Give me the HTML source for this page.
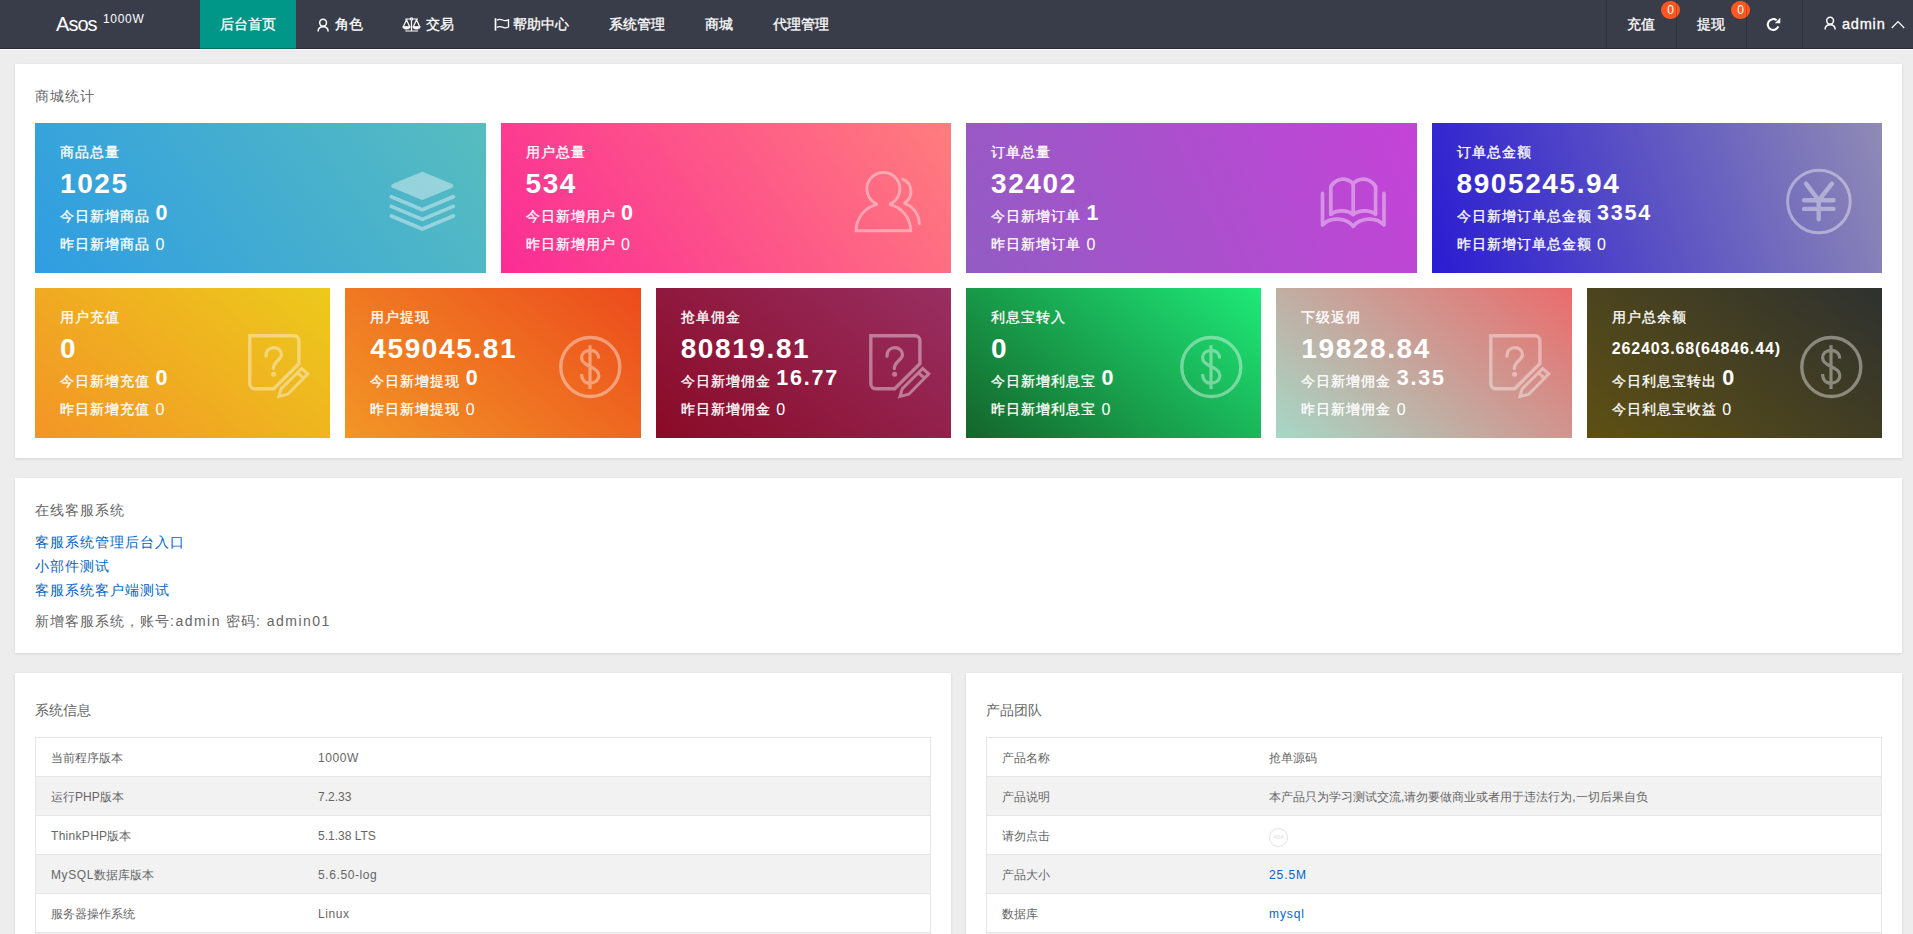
<!DOCTYPE html>
<html lang="zh">
<head>
<meta charset="utf-8">
<title>Asos</title>
<style>
*{box-sizing:border-box}
html,body{margin:0;padding:0}
body{width:1913px;height:934px;overflow:hidden;background:#ededed;font-family:"Liberation Sans",sans-serif;font-size:14px;color:#666;position:relative}
a{color:#0066cc;text-decoration:none}
/* header */
.hd{position:absolute;left:0;top:0;width:1913px;height:49px;background:#393d49;box-shadow:0 1px 0 rgba(255,255,255,.8);z-index:5}
.hd:after{content:"";position:absolute;left:0;bottom:0;width:100%;height:1px;background:rgba(0,0,0,.28)}
.logo{position:absolute;left:56px;top:0;line-height:48px;color:#fff;font-size:20px;letter-spacing:-.95px;white-space:nowrap}
.logo sup{position:absolute;left:47px;top:-5px;font-size:12px;line-height:48px;letter-spacing:.7px}
.nav{position:absolute;left:200px;top:0;height:49px;display:flex}
.nav .it{height:49px;line-height:48px;padding:0 20px;color:#fff;font-size:14px;white-space:nowrap;display:flex;align-items:center}
.nav .it.on{background:#009688}
.nav .it{padding-bottom:2px}
.nav .it svg{margin-right:5px;display:block;position:relative;top:1px}
.rnav{position:absolute;top:0;height:49px;line-height:48px;color:#fff;font-size:14px;border-left:1px solid rgba(0,0,0,.18);white-space:nowrap}
.badge{position:absolute;top:1px;width:19px;height:18px;border-radius:9px;background:#ff5722;color:#fff;font-size:12px;line-height:18px;text-align:center}
/* panels */
.panel{position:absolute;background:#fff;box-shadow:0 1px 3px 0 rgba(0,0,0,.1)}
.legend{position:absolute;left:20px;font-size:14px;color:#666;white-space:nowrap;line-height:20px}
.ls{letter-spacing:1px}
/* cards */
.card{position:absolute;height:150px;color:#fff;letter-spacing:1px;overflow:hidden}
.card div{position:absolute;left:25px;white-space:nowrap;line-height:20px;font-size:14px}
.card .t{top:19px}
.card .n{top:46px;font-size:28px;font-weight:bold;line-height:30px;letter-spacing:1.600px}
.card .a{top:81px}
.card .b{top:111px}
.card .a b{font-size:21.500px;font-weight:bold;margin-left:5.500px;position:relative;top:-1px;letter-spacing:1.800px}
.card .b i{font-style:normal;font-size:16px;margin-left:5.500px;position:relative;top:1px}
.card svg{position:absolute}
.card .n.s{font-size:16px;letter-spacing:.85px}
.card .t,.card .a,.card .b,.nav .it,.rnav{-webkit-text-stroke:.3px #fff}
.card .a b,.card .b i,.badge{-webkit-text-stroke:0}
.ln{position:absolute;left:20px;line-height:20px;white-space:nowrap;font-size:14px}
.c404{position:relative;top:1px;display:inline-block;width:19px;height:19px;border:1px solid #e2e2e2;border-radius:50%;font-size:6px;line-height:17px;text-align:center;color:#ddd;vertical-align:middle;letter-spacing:0}
/* tables */
table{position:absolute;border-collapse:collapse;font-size:12px;color:#666}
table{border:1px solid #e6e6e6}
td{border-top:1px solid #e6e6e6;border-bottom:1px solid #e6e6e6;height:39px;padding:2px 15px 0 15px;white-space:nowrap}
td+td{padding-left:13.500px}
.w6{letter-spacing:.6px}.w9{letter-spacing:.9px}
tr:nth-child(even) td{background:#f2f2f2}
</style>
</head>
<body>

<svg width="0" height="0" style="position:absolute">
<defs>
<symbol id="i-layers" viewBox="0 0 76 70"><g opacity=".4" fill="#fff" stroke="#fff" stroke-linecap="round" stroke-linejoin="round">
<polygon points="37.3,6.800 8.200,18.900 37.300,31 66.400,18.900" stroke-width="4"/>
<g fill="none" stroke-width="3.700"><path d="M6.300 29.800 37.300 42.800 68.300 29.800"/><path d="M6.300 39.400 37.300 52.400 68.300 39.400"/><path d="M6.300 49 37.300 62 68.300 49"/></g></g></symbol>
<symbol id="i-users" viewBox="0 0 76 70"><g opacity=".4" fill="none" stroke="#fff" stroke-width="2.900" stroke-linejoin="miter" stroke-miterlimit="2.2" stroke-linecap="round">
<path d="M5 63.800A27.400 27.400 0 0 1 26.400 37.300 16.500 16.500 0 1 1 38.400 37.300 27.400 27.400 0 0 1 59.800 63.800Z"/>
<path d="M51.700 12.100A13.400 13.400 0 0 1 53 36.200 22 22 0 0 1 68.300 56.700"/></g></symbol>
<symbol id="i-book" viewBox="0 0 76 70"><g opacity=".4" fill="none" stroke="#fff" stroke-width="3.700" stroke-linejoin="round" stroke-linecap="round">
<path d="M6.500 26.400V58C14 50 30 50 37.200 59.500 44.400 50 60.400 50 68 58V26.400"/>
<path d="M14.800 47.200V19.500C18 14 24 12 27 12.200 31 12.400 35 14 37.200 16.800 39.400 14 43.400 12.400 47.400 12.200 50.400 12 56.400 14 59.600 19.500V47.200"/>
<path d="M37.200 16.800V47.500"/>
<path d="M14.800 47.200C20 43 31 42.500 37.200 47.500 43.400 42.500 54.400 43 59.600 47.200"/></g></symbol>
<symbol id="i-yen" viewBox="0 0 76 76"><g opacity=".4" fill="none" stroke="#fff" stroke-linecap="round" stroke-linejoin="round">
<circle cx="36.900" cy="37.500" r="31.300" stroke-width="3"/>
<path stroke-width="4.400" d="M24 19.700 36.700 36.300 50 19.700M22.100 36.300H51.500M22.100 44.900H51.500M36.700 36.300V55.300"/></g></symbol>
<symbol id="i-edit" viewBox="0 0 72 72"><g opacity=".4" fill="none" stroke="#fff">
<path stroke-width="3.400" d="M5.800 5.700H50A4.900 4.900 0 0 1 54.900 10.600V33.700L29.700 58.700H10.700A4.900 4.900 0 0 1 5.800 53.800Z"/>
<path stroke-width="3.300" stroke-linecap="round" d="M22 26.200C22 20.500 25.500 17.700 29.800 17.700 34 17.700 37.500 20.500 37.500 24.800 37.500 30 29.300 31.500 29.300 38.500"/>
<circle cx="29.600" cy="44.200" r="2.500" fill="#fff" stroke="none"/>
<path stroke-width="3" d="M57.600 38.500 63.800 43.800 43.800 64.200 35 66.500 37.200 58.900ZM53.300 42.800 59.500 48"/></g></symbol>
<symbol id="i-usd" viewBox="0 0 72 72"><g opacity=".4" fill="none" stroke="#fff">
<circle cx="35.300" cy="35" r="29.500" stroke-width="3.400"/>
<path stroke-width="3.200" d="M35 13.200V57.100M43.600 26.500C43.600 21 40 18.300 35 18.300 30 18.300 26.600 21.500 26.600 25.600 26.600 30.500 31 32.800 35 34.500 39.500 36.400 43.800 38.800 43.800 43.600 43.800 48.200 40 51.200 35 51.200 30 51.200 26.600 48 26.600 42"/></g></symbol>
</defs></svg>
<div class="hd">
  <div class="logo">Asos<sup>1000W</sup></div>
  <div class="nav">
    <div class="it on">后台首页</div>
    <div class="it"><svg width="14" height="14" viewBox="0 0 14 14" fill="none" stroke="#fff" stroke-width="1.500"><circle cx="7.100" cy="4.700" r="3.400"/><path d="M2.100 13.600C2.100 10.600 4.300 8.800 7.100 8.800S12.100 10.600 12.100 13.600"/></svg>角色</div>
    <div class="it"><svg width="19" height="15" viewBox="0 0 19 15" style="margin-left:-1px" fill="none" stroke="#fff" stroke-width="1.200"><path d="M3.300 2H16M9.500 3V14M3.300 14H16M4.500 2.800 1.400 9.500M4.500 2.800 7.600 9.500M14.500 2.800 11.400 9.500M14.500 2.800 17.600 9.500"/><circle cx="9.500" cy="2" r="1.100" fill="#393d49"/><path fill="#fff" stroke-width=".6" d="M.7 9.500H8.300C8.300 11.400 6.500 12.200 4.500 12.200S.7 11.400.7 9.500ZM10.700 9.500H18.300C18.300 11.400 16.500 12.200 14.500 12.200S10.700 11.400 10.700 9.500Z"/></svg>交易</div>
    <div class="it"><svg width="16" height="15" viewBox="0 0 16 15" style="margin-right:3px" fill="none" stroke="#fff" stroke-width="1.300"><path stroke-width="1.700" d="M1.500 1.200V13.600"/><path d="M2.800 3.200C4.800 2 6.800 2.200 8.600 3 10.300 3.800 12.300 3.800 14.500 2.900V10C12.300 11 10.300 11 8.600 10.200 6.800 9.400 4.800 9.200 2.800 10.400"/></svg>帮助中心</div>
    <div class="it">系统管理</div>
    <div class="it">商城</div>
    <div class="it">代理管理</div>
  </div>
  <div class="rnav" style="left:1606px;width:70px;padding-left:20px">充值<span class="badge" style="left:54px">0</span></div>
  <div class="rnav" style="left:1676px;width:70px;padding-left:20px">提现<span class="badge" style="left:54px">0</span></div>
  <div class="rnav" style="left:1746px;width:56px"><svg style="position:absolute;left:19px;top:16.500px" width="15" height="15" viewBox="0 0 15 15" fill="none" stroke="#fff" stroke-width="2"><path d="M12.300 9.300A5.400 5.400 0 1 1 10.600 3.300"/><path d="M14.300.8V6.300H8.800Z" fill="#fff" stroke="none"/></svg></div>
  <div class="rnav" style="left:1802px;width:111px;padding-left:39px;font-size:14.500px;letter-spacing:.8px"><svg style="position:absolute;left:20px;top:16px" width="14" height="14" viewBox="0 0 14 14" fill="none" stroke="#fff" stroke-width="1.500"><circle cx="7.100" cy="4.700" r="3.400"/><path d="M2.100 13.600C2.100 10.600 4.300 8.800 7.100 8.800S12.100 10.600 12.100 13.600"/></svg>admin<svg style="position:absolute;left:88px;top:19.500px" width="14" height="9" viewBox="0 0 14 9" fill="none" stroke="#fff" stroke-width="1.200"><path d="M.8 8 7 1.500 13.200 8"/></svg></div>
</div>

<div class="panel" style="left:15px;top:64px;width:1887px;height:394px">
  <div class="legend ls" style="top:22px">商城统计</div>
<div class="card" style="left:20.0px;top:59px;width:450.5px;background:linear-gradient(-125deg,#57bdbf,#2f9de2)"><div class="t">商品总量</div><div class="n">1025</div><div class="a">今日新增商品<b>0</b></div><div class="b">昨日新增商品<i>0</i></div><svg style="left:350px;top:44px" width="76" height="70"><use href="#i-layers"/></svg></div>
<div class="card" style="left:485.5px;top:59px;width:450.5px;background:linear-gradient(-125deg,#ff7d7d,#fb2c95)"><div class="t">用户总量</div><div class="n">534</div><div class="a">今日新增用户<b>0</b></div><div class="b">昨日新增用户<i>0</i></div><svg style="left:350.5px;top:44px" width="76" height="70"><use href="#i-users"/></svg></div>
<div class="card" style="left:951.0px;top:59px;width:450.5px;background:linear-gradient(-113deg,#c543d8,#925cc3)"><div class="t">订单总量</div><div class="n">32402</div><div class="a">今日新增订单<b>1</b></div><div class="b">昨日新增订单<i>0</i></div><svg style="left:350px;top:44px" width="76" height="70"><use href="#i-book"/></svg></div>
<div class="card" style="left:1416.5px;top:59px;width:450.5px;background:linear-gradient(-108deg,#8f8bb5,#2a1cd2)"><div class="t">订单总金额</div><div class="n">8905245.94</div><div class="a">今日新增订单总金额<b>3354</b></div><div class="b">昨日新增订单总金额<i>0</i></div><svg style="left:350.5px;top:41px" width="76" height="76"><use href="#i-yen"/></svg></div>
<div class="card" style="left:20.00px;top:224px;width:295.33px;background:linear-gradient(-141deg,#ecca1b,#f39526)"><div class="t">用户充值</div><div class="n">0</div><div class="a">今日新增充值<b>0</b></div><div class="b">昨日新增充值<i>0</i></div><svg style="left:209px;top:42px" width="72" height="72"><use href="#i-edit"/></svg></div>
<div class="card" style="left:330.33px;top:224px;width:295.33px;background:linear-gradient(-141deg,#ec4b1c,#f29626)"><div class="t">用户提现</div><div class="n">459045.81</div><div class="a">今日新增提现<b>0</b></div><div class="b">昨日新增提现<i>0</i></div><svg style="left:209.7px;top:44px" width="72" height="72"><use href="#i-usd"/></svg></div>
<div class="card" style="left:640.67px;top:224px;width:295.33px;background:linear-gradient(-141deg,#982f62,#8a0a26)"><div class="t">抢单佣金</div><div class="n">80819.81</div><div class="a">今日新增佣金<b>16.77</b></div><div class="b">昨日新增佣金<i>0</i></div><svg style="left:209px;top:42px" width="72" height="72"><use href="#i-edit"/></svg></div>
<div class="card" style="left:951.00px;top:224px;width:295.33px;background:linear-gradient(-141deg,#1eea78,#14642a)"><div class="t">利息宝转入</div><div class="n">0</div><div class="a">今日新增利息宝<b>0</b></div><div class="b">昨日新增利息宝<i>0</i></div><svg style="left:209.7px;top:44px" width="72" height="72"><use href="#i-usd"/></svg></div>
<div class="card" style="left:1261.33px;top:224px;width:295.33px;background:linear-gradient(-141deg,#ea6c6c,#a6d8c6)"><div class="t">下级返佣</div><div class="n">19828.84</div><div class="a">今日新增佣金<b>3.35</b></div><div class="b">昨日新增佣金<i>0</i></div><svg style="left:209px;top:42px" width="72" height="72"><use href="#i-edit"/></svg></div>
<div class="card" style="left:1571.67px;top:224px;width:295.33px;background:linear-gradient(-141deg,#2e312f,#5e5013)"><div class="t">用户总余额</div><div class="n s">262403.68(64846.44)</div><div class="a">今日利息宝转出<b>0</b></div><div class="b">今日利息宝收益<i>0</i></div><svg style="left:209.7px;top:44px" width="72" height="72"><use href="#i-usd"/></svg></div>
</div>

<div class="panel" style="left:15px;top:478px;width:1887px;height:175px">
  <div class="legend ls" style="top:22px">在线客服系统</div>
  <div class="ln ls" style="top:54px"><a>客服系统管理后台入口</a></div>
  <div class="ln ls" style="top:78px"><a>小部件测试</a></div>
  <div class="ln ls" style="top:102px"><a>客服系统客户端测试</a></div>
  <div class="ln ls" style="top:133px">新增客服系统，账号<span style="letter-spacing:1.500px">:admin</span> 密码<span style="letter-spacing:1.500px">: admin01</span></div>
</div>

<div class="panel" style="left:15px;top:673px;width:936px;height:300px">
  <div class="legend" style="top:27px">系统信息</div>
  <table style="left:20px;top:64px;width:896px">
  <tr><td style="width:269px">当前程序版本</td><td class="w6">1000W</td></tr>
  <tr><td>运行PHP版本</td><td>7.2.33</td></tr>
  <tr><td><span style="letter-spacing:.3px">ThinkPHP</span>版本</td><td>5.1.38 LTS</td></tr>
  <tr><td><span class="w6">MySQL</span>数据库版本</td><td class="w6">5.6.50-log</td></tr>
  <tr><td>服务器操作系统</td><td class="w6">Linux</td></tr>
  <tr><td>WEB运行环境</td><td>fpm-fcgi</td></tr>
  </table>
</div>
<div class="panel" style="left:966px;top:673px;width:936px;height:300px">
  <div class="legend" style="top:27px">产品团队</div>
  <table style="left:20px;top:64px;width:896px">
  <tr><td style="width:269px">产品名称</td><td>抢单源码</td></tr>
  <tr><td>产品说明</td><td>本产品只为学习测试交流,请勿要做商业或者用于违法行为,一切后果自负</td></tr>
  <tr><td>请勿点击</td><td><span class="c404">404</span></td></tr>
  <tr><td>产品大小</td><td class="w9"><a>25.5M</a></td></tr>
  <tr><td>数据库</td><td class="w9"><a>mysql</a></td></tr>
  <tr><td>&nbsp;</td><td></td></tr>
  </table>
</div>
</body>
</html>
